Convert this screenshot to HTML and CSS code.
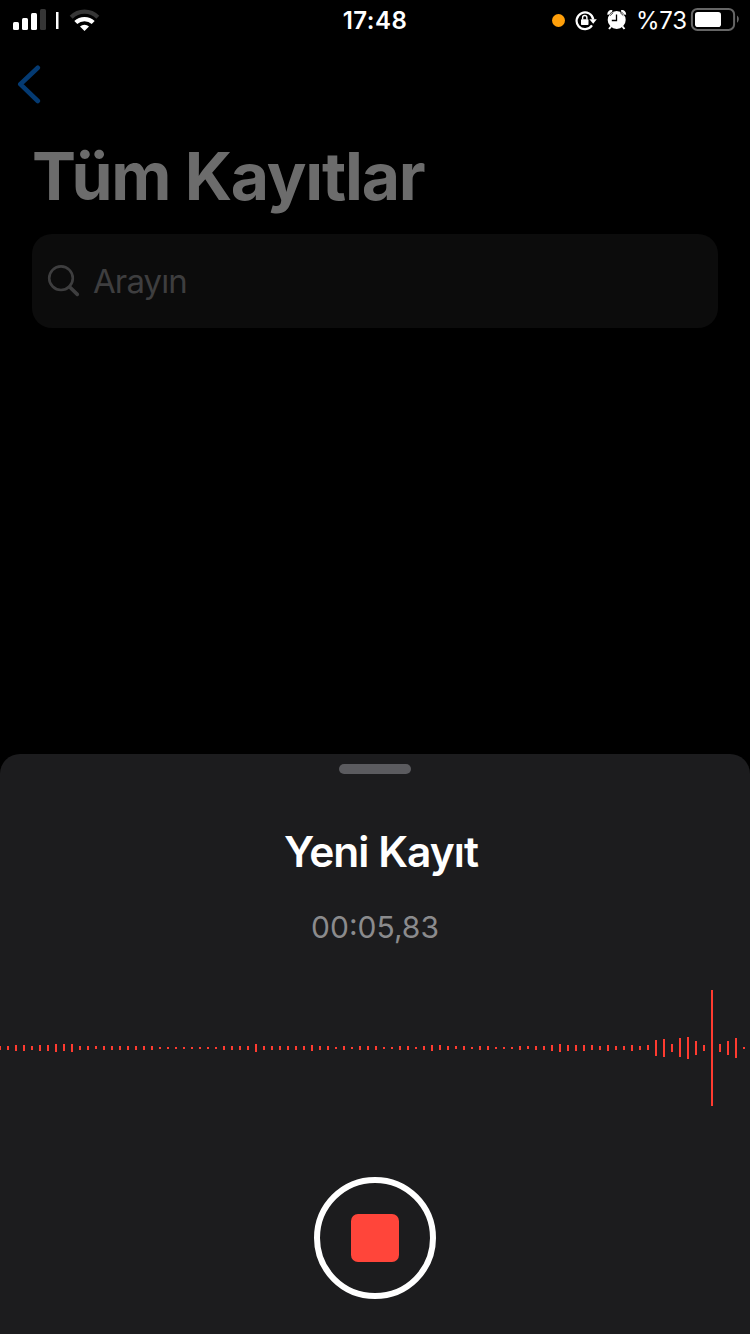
FILE: index.html
```html
<!DOCTYPE html>
<html lang="tr">
<head>
<meta charset="utf-8">
<title>Tüm Kayıtlar</title>
<link rel="stylesheet" href="styles.css">
</head>
<body>
<div class="screen">
  <header class="status">
    <div class="status-left">
      <svg width="110" height="40" viewBox="0 0 110 40">
        <g fill="#fff">
          <rect x="13" y="22" width="6" height="8" rx="1.5"/>
          <rect x="22" y="18" width="6" height="12" rx="1.5"/>
          <rect x="31" y="13" width="6" height="17" rx="1.5"/>
          <rect x="40" y="9" width="6" height="21" rx="1.5" fill="#363636"/>
          <rect x="56" y="12" width="2.500" height="17"/>
        </g>
        <g fill="none" stroke-width="4.200">
          <path d="M71.200 17.200A18.800 18.800 0 0 1 97.800 17.200" stroke="#363636"/>
          <path d="M75.800 22.600A12.400 12.400 0 0 1 93.200 22.600" stroke="#fff"/>
        </g>
        <path d="M84.500 31L80 26.600A6.300 6.300 0 0 1 89 26.600Z" fill="#fff"/>
      </svg>
    </div>
    <div class="clock">17:48</div>
    <div class="status-right">
      <span class="mic-dot"></span>
      <svg class="lock" width="22" height="22" viewBox="0 0 22 22">
        <path d="M17 15.400A8.400 8.400 0 1 1 18.300 9.500" fill="none" stroke="#fff" stroke-width="2.200"/>
        <path d="M14.400 9.200H21.800L18.200 13.800Z" fill="#fff"/>
        <rect x="6" y="9.300" width="7.500" height="5.800" rx=".8" fill="#fff"/>
        <path d="M7.600 9.500V7.700a2.150 2.150 0 0 1 4.300 0V9.500" fill="none" stroke="#fff" stroke-width="1.400"/>
      </svg>
      <svg class="alarm" width="20" height="20" viewBox="0 0 20 20">
        <circle cx="9.700" cy="10" r="9" fill="#fff"/>
        <path d="M1.500 4.600A3.200 3.200 0 0 1 5.200 1.200M14.200 1.200A3.200 3.200 0 0 1 17.900 4.600" stroke="#fff" stroke-width="2.400" fill="none"/>
        <path d="M3.100 5.600L6.300 2.500M13.100 2.500L16.300 5.600" stroke="#000" stroke-width=".8"/>
        <path d="M4 16.500L2 19M15.500 16.500L17.500 19" stroke="#fff" stroke-width="2"/>
        <path d="M9.500 4.500V10.500H4.800" fill="none" stroke="#000" stroke-width="1.300"/>
      </svg>
      <span class="percent">%73</span>
      <svg width="50" height="24" viewBox="0 0 50 24">
        <rect x="1.900" y="1.900" width="42.200" height="21" rx="5.500" fill="none" stroke="#666" stroke-width="2"/>
        <rect x="5" y="5" width="26" height="15" rx="2.800" fill="#fff"/>
        <path d="M47 8.500C49.400 10 49.400 14 47 15.700Z" fill="#666"/>
      </svg>
    </div>
  </header>
  <nav class="nav">
    <svg width="26" height="40" viewBox="0 0 26 40"><path d="M21.800 3.800L4.300 20.200L21.800 37" fill="none" stroke="#043a72" stroke-width="4.600" stroke-linecap="round" stroke-linejoin="round"/></svg>
  </nav>
  <h1 class="title">Tüm Kayıtlar</h1>
  <div class="search">
    <svg width="34" height="34" viewBox="0 0 34 34"><circle cx="14" cy="14.200" r="11.800" fill="none" stroke="#3e3e3f" stroke-width="2.600"/><path d="M22.700 23L30.300 30.400" stroke="#3e3e3f" stroke-width="3.600" stroke-linecap="round"/></svg>
    <span>Arayın</span>
  </div>
  <section class="sheet">
    <div class="grabber"></div>
    <h2 class="name">Yeni Kayıt</h2>
    <div class="elapsed">00:05,83</div>
    <div class="wave" id="wave"></div>
    <button class="record" aria-label="Durdur"><span class="stop"></span></button>
  </section>
</div>
<script src="wave.js"></script>
</body>
</html>
```
FILE: styles.css
```css
* { box-sizing: border-box; }
body { margin: 0; background: #000; }
.screen {
  display: flex;
  flex-direction: column;
  width: 750px;
  height: 1334px;
  overflow: hidden;
  background: #000;
  color: #fff;
  font-family: Inter, "Liberation Sans", sans-serif;
}
svg { display: block; flex: none; }
.status {
  display: grid;
  grid-template-columns: 1fr auto 1fr;
  height: 40px;
}
.clock {
  font-size: 24px;
  font-weight: 600;
  line-height: 41px;
  letter-spacing: 0.5px;
}
.status-right {
  display: flex;
  justify-content: flex-end;
  align-items: flex-start;
  padding: 7px 10px 0 0;
}
.mic-dot {
  width: 13px;
  height: 13px;
  margin: 7px 10px 0 0;
  border-radius: 50%;
  background: #ff9f0a;
}
.lock { margin: 3px 10px 0 0; }
.alarm { margin: 3px 9px 0 0; }
.percent {
  width: 54px;
  font-size: 24px;
  line-height: 28px;
  letter-spacing: -0.3px;
  white-space: nowrap;
}
.nav { height: 88px; padding: 24px 0 0 16px; }
.title {
  height: 106px;
  margin: 0;
  padding-left: 32px;
  color: #6c6c6c;
  font-size: 66px;
  font-weight: 700;
  line-height: 96px;
  letter-spacing: -1.250px;
  white-space: nowrap;
}
.search {
  display: flex;
  align-items: center;
  gap: 12px;
  height: 94px;
  margin: 0 32px;
  padding-left: 15px;
  border-radius: 20px;
  background: #0c0c0c;
  color: #3e3e3f;
  font-size: 33px;
  letter-spacing: -0.9px;
}
.sheet {
  display: flex;
  flex-direction: column;
  align-items: center;
  height: 580px;
  margin-top: 426px;
  padding-top: 10px;
  border-radius: 20px 20px 0 0;
  background: #1c1c1e;
}
.grabber { width: 72px; height: 10px; border-radius: 5px; background: #5b5b5f; }
.name {
  margin: 50px 0 0 12px;
  font-size: 42.500px;
  font-weight: 600;
  line-height: 56px;
  letter-spacing: -1px;
}
.elapsed {
  margin-top: 27px;
  color: #8b8b8d;
  font-size: 30px;
  line-height: 40px;
}
.wave {
  display: flex;
  align-items: flex-start;
  gap: 6px;
  width: 752px;
  height: 116px;
  margin: 43px 0 0 0;
}
.bar { flex: none; width: 2px; background: #ff3b30; }
.record {
  display: grid;
  place-items: center;
  flex: none;
  width: 122px;
  height: 122px;
  margin-top: 71px;
  padding: 0;
  border: 6px solid #fff;
  border-radius: 50%;
  background: none;
}
.stop { width: 48px; height: 48px; border-radius: 7px; background: #ff453a; }
```
FILE: wave.js
```js
// Heights of the waveform bars, oldest sample first.
const levels = [
  4, 4, 6, 6, 4, 6, 6, 8, 7, 8, 4, 4, 3, 4, 4, 4, 4, 4, 4, 4, 2, 2, 2, 2, 2, 2, 2, 2, 4, 4, 4, 4,
  8, 4, 4, 4, 4, 4, 4, 6, 4, 4, 2, 4, 2, 4, 4, 4, 2, 2, 4, 4, 2, 4, 6, 5, 4, 3, 4, 2, 4, 4, 2,
  2, 2, 4, 3, 4, 4, 6, 8, 6, 6, 6, 5, 4, 6, 4, 4, 6, 4, 5, 16, 18, 8, 19, 22, 14, 6, 116, 8, 14, 20, 2
];
const wave = document.getElementById("wave");
for (const level of levels) {
  const bar = document.createElement("span");
  bar.className = "bar";
  bar.style.height = level + "px";
  bar.style.marginTop = 58 - Math.ceil(level / 2) + "px";
  wave.append(bar);
}
```
